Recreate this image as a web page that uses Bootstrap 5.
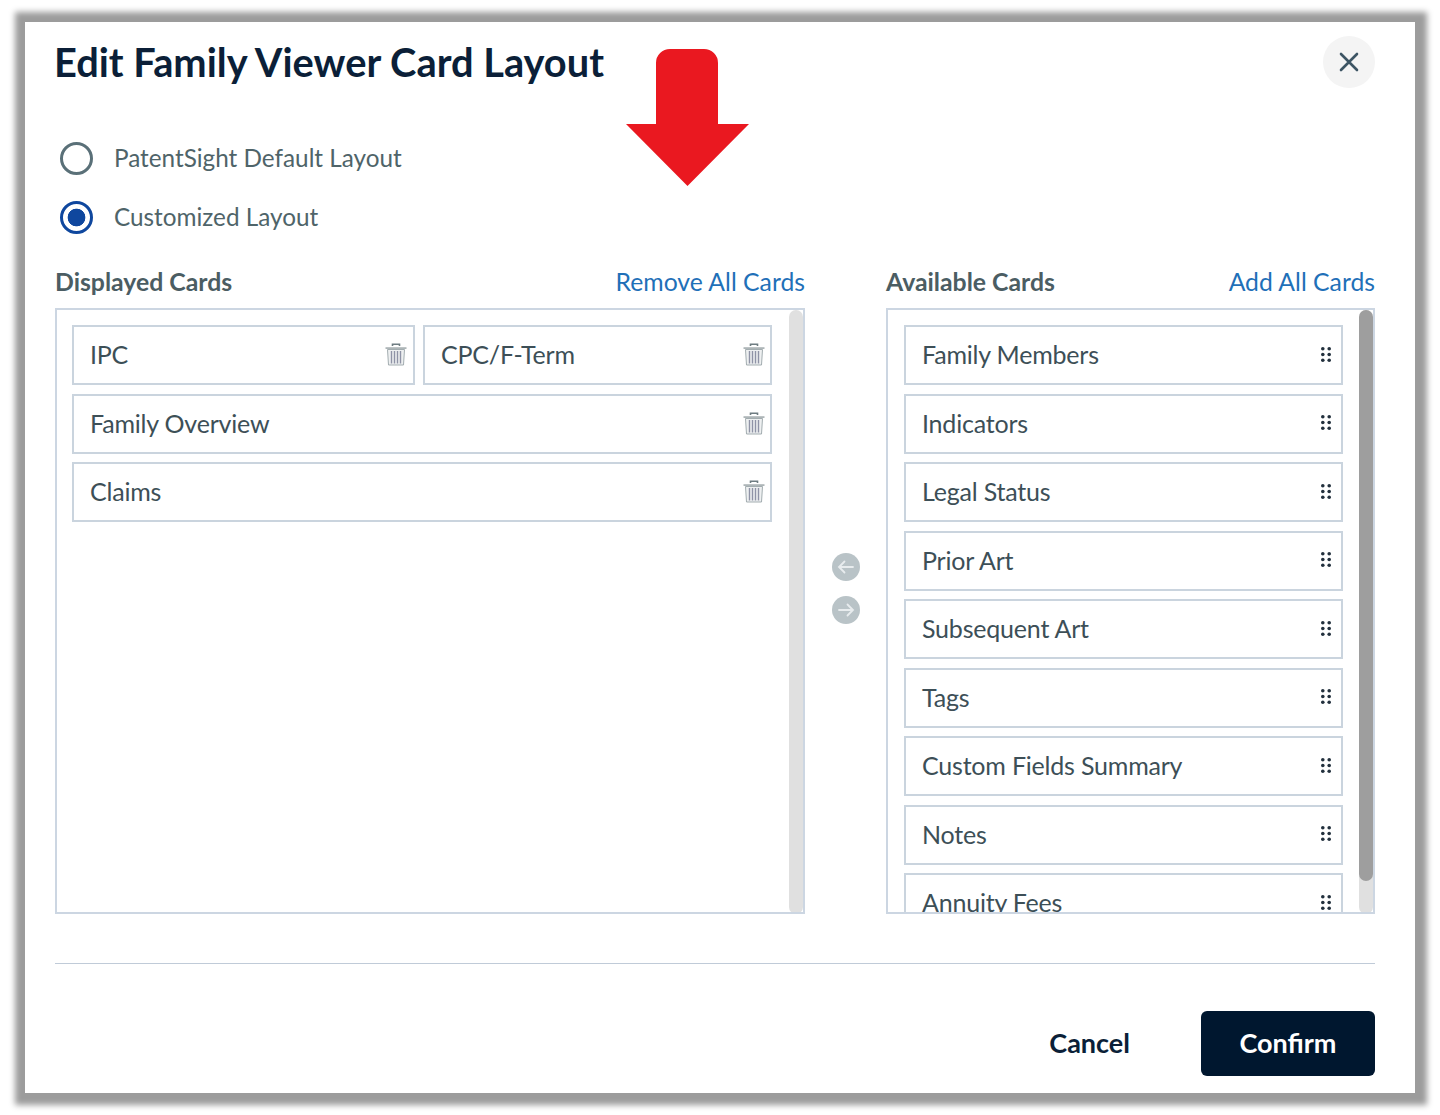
<!DOCTYPE html>
<html lang="en">
<head>
<meta charset="utf-8">
<title>Edit Family Viewer Card Layout</title>
<link href="https://cdn.jsdelivr.net/npm/bootstrap@5.3.0/dist/css/bootstrap.min.css" rel="stylesheet">
<style>
html,body{height:100%;background:#fff;overflow:hidden}
body{font-family:"Lato","Liberation Sans",sans-serif;color:#3d4f57}
.stage{width:1440px;height:1115px;padding:22px 25px}
.dialog{position:relative;width:1390px;height:1071px;background:#fff;box-shadow:1px 1px 6px 11px #9c9c9c;padding:0 40px 0 30px}
.dlg-head{height:83px;align-items:center}
.dlg-title{font-size:39.8px;font-weight:700;color:#0b1f38;line-height:1;margin:0 0 0 -1px;position:relative;top:-2px}
.close-round{width:52px;height:52px;border-radius:50%;background:#f4f4f4;border:0;padding:0;display:flex;align-items:center;justify-content:center;position:relative;top:-2px}
.big-arrow{position:absolute;left:601px;top:27px}
.radios{margin-top:24px;margin-left:5px}
.radio-row{height:59px;display:flex;align-items:center;margin:0;padding:0;min-height:0}
.radio-row .form-check-input{width:33px;height:33px;margin:0 21px 0 0;float:none;border:3px solid #5a7078;background:#fff;box-shadow:none}
.radio-row .form-check-input:checked{border-color:#0f479e;background-color:#fff;background-image:radial-gradient(circle,#0f479e 0,#0f479e 8.5px,#fff 9.2px)}
.radio-row .form-check-label{font-size:24.3px;color:#4f6469;line-height:1;opacity:1}
.heads{height:47px;margin-top:14px}
.colhead{align-items:center;height:42px}
.colhead strong{font-size:24.8px;font-weight:700;color:#4b5d63}
.colhead a{font-size:24.75px;color:#1f70b8;text-decoration:none}
.col-left{width:750px}
.col-mid{width:81px;padding-top:245px;gap:15px}
.col-right{width:489px}
.gutter{width:81px}
.panel-box{height:606px;border:2px solid #ccd6e2;overflow:hidden}
.list-area{flex:1 1 auto;min-width:0;padding-top:15px}
.left-list{padding-left:15px;padding-right:17px}
.right-list{padding-left:16px;padding-right:16px}
.tile{height:60px;border:2px solid #cad4de;margin-bottom:8.5px;padding:0 10px 0 16px;font-size:25px;letter-spacing:-.2px;color:#3d4f57;align-items:center;background:#fff;flex:0 0 auto}
.left-list .tile{padding-right:5px}
.tile-a{width:343px}
.tile-a.tile{padding-right:6px}
.tile-b{width:349px;margin-left:8px}
.track{width:14px;flex:0 0 14px;border-radius:7px;height:604px;background:#e0e0e0}
.thumb{width:14px;height:571px;border-radius:7px;background:#9e9e9e}
.mover{width:28px;height:28px;border-radius:50%;background:#b9c3c7;display:flex;align-items:center;justify-content:center;border:0;padding:0}
.rule{height:1px;background:#c0cbd8;margin-top:49px}
.foot{margin-top:47px;align-items:center;justify-content:flex-end}
.btn-cancel{font-size:27px;font-weight:700;color:#0b1f38;background:none;border:0;padding:0;margin-right:71px}
.btn-confirm{width:174px;height:65px;background:#00172f;color:#fff;font-size:27px;font-weight:700;border:0;border-radius:6px;padding:0}
.grip{flex:0 0 auto;position:relative;top:-1px}
.bin{flex:0 0 auto;position:relative;top:-1px}
</style>
</head>
<body>
<svg width="0" height="0" class="d-block position-absolute">
<defs>
<symbol id="ico-bin" viewBox="0 0 22 24">
<path d="M7.5 4V2.2h7V4" fill="none" stroke="#6f7d82" stroke-width="1.6"/>
<path d="M.5 5.2h21v1.8H.5z" fill="#aeb6b8"/>
<path d="M2.5 7.5h17L18.5 23h-15z" fill="#eef0f1" stroke="#a3adb0" stroke-width="1"/>
<path d="M6.5 9v12.5M9.5 9v12.5M12.5 9v12.5M15.5 9v12.5" stroke="#8f93a6" stroke-width="1.4"/>
</symbol>
<symbol id="ico-grip" viewBox="0 0 10 15">
<g fill="#22303d"><circle cx="1.8" cy="1.8" r="1.8"/><circle cx="8.2" cy="1.8" r="1.8"/><circle cx="1.8" cy="7.5" r="1.8"/><circle cx="8.2" cy="7.5" r="1.8"/><circle cx="1.8" cy="13.2" r="1.8"/><circle cx="8.2" cy="13.2" r="1.8"/></g>
</symbol>
</defs>
</svg>
<div class="stage">
<div class="dialog">
  <div class="d-flex justify-content-between dlg-head">
    <h1 class="dlg-title">Edit Family Viewer Card Layout</h1>
    <button class="close-round" aria-label="Close">
      <svg width="20" height="20" viewBox="0 0 20 20"><path d="M2 2l16 16M18 2L2 18" stroke="#3d5564" stroke-width="2.6" stroke-linecap="round"/></svg>
    </button>
  </div>
  <svg class="big-arrow" width="123" height="138" viewBox="0 0 123 138"><path d="M30 75V14A14 14 0 0 1 44 0H78A14 14 0 0 1 92 14V75H123L61.5 137 0 75Z" fill="#ea1820"/></svg>

  <div class="radios">
    <div class="form-check radio-row">
      <input class="form-check-input" type="radio" name="lay" id="r1">
      <label class="form-check-label" for="r1">PatentSight Default Layout</label>
    </div>
    <div class="form-check radio-row">
      <input class="form-check-input" type="radio" name="lay" id="r2" checked>
      <label class="form-check-label" for="r2">Customized Layout</label>
    </div>
  </div>

  <div class="d-flex heads">
    <div class="d-flex justify-content-between colhead col-left"><strong>Displayed Cards</strong><a href="#">Remove All Cards</a></div>
    <div class="gutter"></div>
    <div class="d-flex justify-content-between colhead col-right"><strong>Available Cards</strong><a href="#">Add All Cards</a></div>
  </div>

  <div class="d-flex">
    <div class="col-left">
      <div class="panel-box d-flex">
        <div class="list-area left-list">
          <div class="d-flex">
            <div class="tile tile-a d-flex justify-content-between"><span>IPC</span><svg class="bin" width="22" height="24"><use href="#ico-bin"/></svg></div>
            <div class="tile tile-b d-flex justify-content-between"><span>CPC/F-Term</span><svg class="bin" width="22" height="24"><use href="#ico-bin"/></svg></div>
          </div>
          <div class="tile d-flex justify-content-between"><span>Family Overview</span><svg class="bin" width="22" height="24"><use href="#ico-bin"/></svg></div>
          <div class="tile d-flex justify-content-between"><span>Claims</span><svg class="bin" width="22" height="24"><use href="#ico-bin"/></svg></div>
        </div>
        <div class="track"></div>
      </div>
    </div>
    <div class="col-mid d-flex flex-column align-items-center">
      <button class="mover" aria-label="Move left"><svg width="18" height="14" viewBox="0 0 18 14"><path d="M16 7H2M7.5 1.5L2 7l5.5 5.5" fill="none" stroke="#e8ecee" stroke-width="1.8" stroke-linecap="round"/></svg></button>
      <button class="mover" aria-label="Move right"><svg width="18" height="14" viewBox="0 0 18 14"><path d="M2 7h14M10.5 1.5L16 7l-5.5 5.5" fill="none" stroke="#e8ecee" stroke-width="1.8" stroke-linecap="round"/></svg></button>
    </div>
    <div class="col-right">
      <div class="panel-box d-flex">
        <div class="list-area right-list">
          <div class="tile d-flex justify-content-between"><span>Family Members</span><svg class="grip" width="10" height="15"><use href="#ico-grip"/></svg></div>
          <div class="tile d-flex justify-content-between"><span>Indicators</span><svg class="grip" width="10" height="15"><use href="#ico-grip"/></svg></div>
          <div class="tile d-flex justify-content-between"><span>Legal Status</span><svg class="grip" width="10" height="15"><use href="#ico-grip"/></svg></div>
          <div class="tile d-flex justify-content-between"><span>Prior Art</span><svg class="grip" width="10" height="15"><use href="#ico-grip"/></svg></div>
          <div class="tile d-flex justify-content-between"><span>Subsequent Art</span><svg class="grip" width="10" height="15"><use href="#ico-grip"/></svg></div>
          <div class="tile d-flex justify-content-between"><span>Tags</span><svg class="grip" width="10" height="15"><use href="#ico-grip"/></svg></div>
          <div class="tile d-flex justify-content-between"><span>Custom Fields Summary</span><svg class="grip" width="10" height="15"><use href="#ico-grip"/></svg></div>
          <div class="tile d-flex justify-content-between"><span>Notes</span><svg class="grip" width="10" height="15"><use href="#ico-grip"/></svg></div>
          <div class="tile d-flex justify-content-between"><span>Annuity Fees</span><svg class="grip" width="10" height="15"><use href="#ico-grip"/></svg></div>
        </div>
        <div class="track"><div class="thumb"></div></div>
      </div>
    </div>
  </div>

  <div class="rule"></div>
  <div class="d-flex foot">
    <button class="btn btn-cancel">Cancel</button>
    <button class="btn btn-confirm">Confirm</button>
  </div>
</div>
</div>
<script src="https://cdn.jsdelivr.net/npm/bootstrap@5.3.0/dist/js/bootstrap.bundle.min.js"></script>
</body>
</html>
